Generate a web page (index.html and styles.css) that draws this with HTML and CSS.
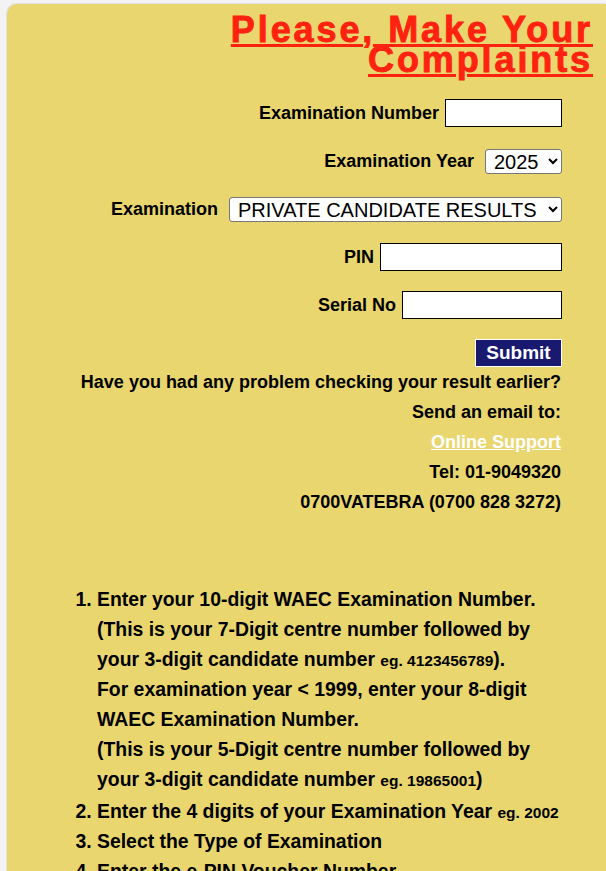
FILE: index.html
```html
<!DOCTYPE html>
<html lang="en">
<head>
<meta charset="utf-8">
<title>Please, Make Your Complaints</title>
<link rel="stylesheet" href="styles.css">
</head>
<body>
<div class="panel">
  <h1 class="title"><span class="title-text">Please, Make Your<br>Complaints</span></h1>

  <form class="form" onsubmit="return false;">
    <div class="row">
      <label class="lbl" for="examno">Examination Number</label>
      <input class="txt w-num" id="examno" type="text">
    </div>
    <div class="row">
      <label class="lbl" for="examyear">Examination Year</label>
      <select class="sel w-year" id="examyear">
        <option>2025</option>
        <option>2024</option>
        <option>2023</option>
      </select>
    </div>
    <div class="row">
      <label class="lbl" for="examtype">Examination</label>
      <select class="sel w-type" id="examtype">
        <option>PRIVATE CANDIDATE RESULTS</option>
        <option>SCHOOL CANDIDATE RESULTS</option>
      </select>
    </div>
    <div class="row">
      <label class="lbl" for="pin">PIN</label>
      <input class="txt w-pin" id="pin" type="text">
    </div>
    <div class="row">
      <label class="lbl" for="serial">Serial No</label>
      <input class="txt w-serial" id="serial" type="text">
    </div>
    <div class="row row-submit">
      <button class="submit" type="submit">Submit</button>
    </div>
  </form>

  <div class="contact">
    <p class="line">Have you had any problem checking your result earlier?</p>
    <p class="line">Send an email to:</p>
    <p class="line"><a class="support" href="#">Online Support</a></p>
    <p class="line">Tel: 01-9049320</p>
    <p class="line">0700VATEBRA (0700 828 3272)</p>
  </div>

  <ol class="steps">
    <li class="step-first">Enter your 10-digit WAEC Examination Number.<br>(This is your 7-Digit centre number followed by<br>your 3-digit candidate number <span class="eg">eg. 4123456789</span>).<br>For examination year &lt; 1999, enter your 8-digit<br>WAEC Examination Number.<br>(This is your 5-Digit centre number followed by<br>your 3-digit candidate number <span class="eg">eg. 19865001</span>)</li>
    <li>Enter the 4 digits of your Examination Year <span class="eg">eg. 2002</span></li>
    <li>Select the Type of Examination</li>
    <li>Enter the e-PIN Voucher Number</li>
    <li>Enter the e-PIN Voucher Serial Number</li>
    <li>Click Submit and wait for your result</li>
  </ol>
</div>
</body>
</html>
```
FILE: styles.css
```css
html {
  scrollbar-width: none;
}

body {
  margin: 0;
  background: #f3f3f3;
  font-family: "Liberation Sans", Arial, sans-serif;
  color: #000;
}

.panel {
  margin: 4px 0 0 7px;
  padding: 11px 15px 40px 0;
  background: #e9d66f;
  border-radius: 10px 0 0 0;
  box-shadow: -1px -1px 0 #e2e2e2;
}

.title {
  margin: 0 -2px 0 0;
  text-align: right;
  font-size: 36px;
  font-weight: bold;
  line-height: 30px;
  letter-spacing: 2.9px;
  color: #ff2210;
  -webkit-text-stroke: 0.9px #ff2210;
}

.title-text {
  text-decoration: underline;
  text-decoration-thickness: 3px;
  text-underline-offset: 2px;
}

.form {
  margin: 14px 29px 0 0;
  display: flex;
  flex-direction: column;
  align-items: flex-end;
}

.row {
  height: 48px;
  display: flex;
  align-items: center;
  justify-content: flex-end;
  gap: 6px;
}

.lbl {
  font-size: 18px;
  font-weight: bold;
}

.txt {
  box-sizing: border-box;
  height: 28px;
  border: 1px solid #000;
  background: #fff;
  margin: 0;
  padding: 0 4px;
  font-size: 18px;
  font-family: "Liberation Sans", Arial, sans-serif;
}

.w-num { width: 117px; }
.w-pin { width: 182px; }
.w-serial { width: 160px; }

.sel {
  box-sizing: border-box;
  height: 25px;
  margin: 0 0 0 5px;
  padding: 0 0 0 4px;
  font-size: 20px;
  font-family: "Liberation Sans", Arial, sans-serif;
  color: #000;
  background: #fff;
  border: 1px solid #767676;
  border-radius: 3px;
}

.w-year { width: 77px; }
.w-type { width: 333px; }

.row-submit {
  height: 28px;
  margin-top: 10px;
}

.submit {
  box-sizing: border-box;
  width: 87px;
  height: 28px;
  margin: 0;
  padding: 0;
  border: 1px solid #fff;
  background: #191970;
  color: #fff;
  font-family: "Liberation Sans", Arial, sans-serif;
  font-size: 19px;
  font-weight: bold;
}

.contact {
  margin: 0 30px 0 0;
  text-align: right;
  font-size: 18px;
  font-weight: bold;
  line-height: 30px;
}

.line {
  margin: 0;
}

.support {
  color: #fff;
  text-decoration: underline;
}

.steps {
  margin: 67px 0 0 0;
  padding-left: 90px;
  font-size: 19.4px;
  font-weight: bold;
  line-height: 30px;
}

.step-first {
  margin-bottom: 2px;
}

.eg {
  font-size: 15.5px;
  line-height: 1;
}
```
